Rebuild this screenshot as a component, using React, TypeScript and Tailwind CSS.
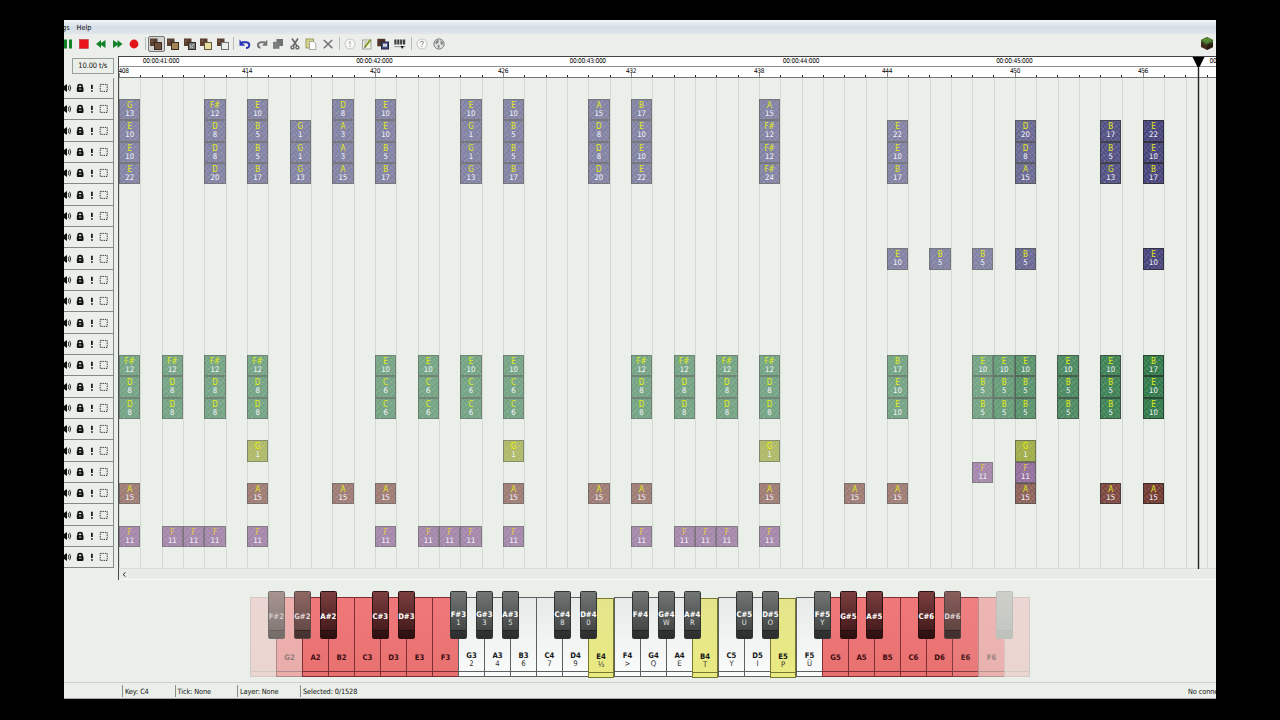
import type { ReactNode } from "react";
import clsx from "clsx";

const STEP = 21.333;
const ROWS = 23;

type Note = { tick: number; row: number; name: string; num: number; kind: string };

// "tick:name:clicks" for every layer
const layers: { row: number; kind: string; notes: string }[] = [
  { row: 1, kind: "harp", notes: "0:G:13 4:F#:12 6:E:10 10:D:8 12:E:10 16:E:10 18:E:10 22:A:15 24:B:17 30:A:15" },
  {
    row: 2,
    kind: "harp",
    notes: "0:E:10 4:D:8 6:B:5 8:G:1 10:A:3 12:E:10 16:G:1 18:B:5 22:D:8 24:E:10 30:F#:12 36:E:22 42:D:20 46:B:17 48:E:22",
  },
  {
    row: 3,
    kind: "harp",
    notes: "0:E:10 4:D:8 6:B:5 8:G:1 10:A:3 12:B:5 16:G:1 18:B:5 22:D:8 24:E:10 30:F#:12 36:E:10 42:D:8 46:B:5 48:E:10",
  },
  {
    row: 4,
    kind: "harp",
    notes: "0:E:22 4:D:20 6:B:17 8:G:13 10:A:15 12:B:17 16:G:13 18:B:17 22:D:20 24:E:22 30:F#:24 36:B:17 42:A:15 46:G:13 48:B:17",
  },
  { row: 8, kind: "harp", notes: "36:E:10 38:B:5 40:B:5 42:B:5 48:E:10" },
  {
    row: 13,
    kind: "bass",
    notes:
      "0:F#:12 2:F#:12 4:F#:12 6:F#:12 12:E:10 14:E:10 16:E:10 18:E:10 24:F#:12 26:F#:12 28:F#:12 30:F#:12 36:B:17 40:E:10 41:E:10 42:E:10 44:E:10 46:E:10 48:B:17",
  },
  {
    row: 14,
    kind: "bass",
    notes: "0:D:8 2:D:8 4:D:8 6:D:8 12:C:6 14:C:6 16:C:6 18:C:6 24:D:8 26:D:8 28:D:8 30:D:8 36:E:10 40:B:5 41:B:5 42:B:5 44:B:5 46:B:5 48:E:10",
  },
  {
    row: 15,
    kind: "bass",
    notes: "0:D:8 2:D:8 4:D:8 6:D:8 12:C:6 14:C:6 16:C:6 18:C:6 24:D:8 26:D:8 28:D:8 30:D:8 36:E:10 40:B:5 41:B:5 42:B:5 44:B:5 46:B:5 48:E:10",
  },
  { row: 17, kind: "snare", notes: "6:G:1 18:G:1 30:G:1 42:G:1" },
  { row: 18, kind: "click", notes: "40:F:11 42:F:11" },
  {
    row: 19,
    kind: "drum",
    notes: "0:A:15 6:A:15 10:A:15 12:A:15 18:A:15 22:A:15 24:A:15 30:A:15 34:A:15 36:A:15 42:A:15 46:A:15 48:A:15",
  },
  {
    row: 21,
    kind: "click",
    notes: "0:F:11 2:F:11 3:F:11 4:F:11 6:F:11 12:F:11 14:F:11 15:F:11 16:F:11 18:F:11 24:F:11 26:F:11 27:F:11 28:F:11 30:F:11",
  },
];

const notes: Note[] = layers.flatMap((l) =>
  l.notes.split(" ").map((s) => {
    const [tick, name, num] = s.split(":");
    return { tick: +tick, row: l.row, name, num: +num, kind: l.kind };
  })
);

const kinds: Record<string, string> = {
  harp: "bg-[#45437a] border-[#33333f]",
  bass: "bg-[#2f7848] border-[#2c4636]",
  snare: "bg-[#8a9a1a] border-[#4e5726]",
  click: "bg-[#7a4a85] border-[#4b3a50]",
  drum: "bg-[#71382f] border-[#3f2c2a]",
};

const fade = (tick: number) => {
  if (tick >= 48) return 1;
  if (tick >= 46) return 0.92;
  if (tick >= 44) return 0.85;
  if (tick >= 42) return 0.78;
  if (tick >= 41) return 0.7;
  return 0.63;
};

const NoteBlock = ({ note }: { note: Note }) => (
  <div className="relative flex flex-col items-center pt-[3px]" style={{ gridColumn: note.tick + 1, gridRow: note.row + 1 }}>
    {/* only the block fades, the label stays readable */}
    <div className={clsx("absolute inset-0 border", kinds[note.kind])} style={{ opacity: fade(note.tick) }}>
      <div className="h-full bg-[repeating-linear-gradient(50deg,#ffffff1a_0px,#ffffff1a_1px,transparent_1px,transparent_3px),repeating-linear-gradient(-50deg,#ffffff16_0px,#ffffff16_1px,transparent_1px,transparent_4px)]" />
    </div>
    <span
      className={clsx(
        "relative text-[8px] leading-[8px]",
        note.kind === "click" ? "text-[#e6c93a]" : note.kind === "snare" ? "text-[#e6f000]" : "text-[#e2ec14]"
      )}
    >
      {note.name}
    </span>
    <span className="relative text-[7.7px] leading-[8.5px] text-[#f4f4fb]">{note.num}</span>
  </div>
);

const LayerRow = () => (
  <div className="h-[21.333px] shrink-0 border-b border-[#85898a] flex items-center">
    <svg width="49" height="20" viewBox="0 0 49 20">
      <path d="M0 8 L3 6 V14 L0 12Z" fill="#111" />
      <path d="M4.2 8 Q5.4 10 4.2 12 M5.6 6.8 Q7.8 10 5.6 13.2" stroke="#333" fill="none" strokeWidth="1" />
      <path d="M14.1 9.5 V8.2 Q14.1 6.6 16.1 6.6 Q18.1 6.6 18.1 8.2 V9.5" stroke="#151515" strokeWidth="1.6" fill="none" />
      <rect x="12.8" y="9" width="6.7" height="5" rx="1" fill="#151515" />
      <rect x="15" y="10.6" width="2.3" height="1.1" fill="#bbb" />
      <path d="M27.9 6.8 V11 M27.9 12.2 V13.8" stroke="#111" strokeWidth="1.7" />
      <rect x="36.2" y="6.4" width="7" height="7" fill="none" stroke="#222" strokeWidth="0.9" strokeDasharray="1.4 0.9" />
    </svg>
  </div>
);

const Tool = ({ children, active }: { children: ReactNode; active?: boolean }) => (
  <div className={clsx("w-[16.6px] h-[16px] shrink-0 flex items-center justify-center", active && "border border-[#777] bg-[#d3d3d3] rounded-[2px]")}>
    <svg width="14" height="14" viewBox="0 0 14 14" className="shrink-0">
      {children}
    </svg>
  </div>
);

const Sep = () => (
  <div className="w-[5.7px] shrink-0 flex justify-center">
    <div className="w-px h-[13px] bg-[#b9bdba]" />
  </div>
);

const Blocks = ({ fill, stroke = "#3a2b20" }: { fill: string; stroke?: string }) => (
  <>
    <rect x="1" y="1.5" width="7.5" height="7.5" fill="#5a4030" />
    <path d="M2 3h2v2H2zM5 5h2v2H5z" fill="#745540" />
    <rect x="5.5" y="5.5" width="7" height="7" fill={fill} stroke={stroke} />
  </>
);

const Toolbar = () => (
  <div className="h-[21.5px] shrink-0 flex items-center pb-[2px] pr-[2px] bg-[#ebeeeb]">
    <div className="flex items-center -ml-[4.6px]">
      <Tool>
        <path d="M3 2.5h3v9H3zM8 2.5h3v9H8z" fill="#118527" />
      </Tool>
      <Tool>
        <rect x="2.3" y="2.5" width="9" height="9" fill="#e9151b" stroke="#b3393a" strokeWidth=".6" />
      </Tool>
      <Tool>
        <path d="M7 3v3l4.5-3v8L7 8v3L2 7z" fill="#13832a" />
      </Tool>
      <Tool>
        <path d="M7.5 3v3L3 3v8l4.5-3v3l5-4z" fill="#13832a" />
      </Tool>
      <Tool>
        <circle cx="7" cy="7" r="4.4" fill="#e3131a" />
      </Tool>
      <Sep />
      <Tool active>
        <Blocks fill="#6d503b" />
      </Tool>
      <Tool>
        <Blocks fill="#a28351" />
      </Tool>
      <Tool>
        <Blocks fill="#777c7d" />
        <path d="M7 11l4-4M7 8l3 3" stroke="#c8cccc" />
      </Tool>
      <Tool>
        <Blocks fill="#e6dfa3" stroke="#625837" />
      </Tool>
      <Tool>
        <Blocks fill="#e8eeee" stroke="#6a7375" />
      </Tool>
      <Sep />
      <Tool>
        <path d="M4 5.2H8.5Q11.5 5.5 11.3 8.5Q11 11 8 11" fill="none" stroke="#2a35b8" strokeWidth="2" />
        <path d="M1.5 2.5V8.8H7.2z" fill="#2a35b8" />
      </Tool>
      <Tool>
        <path d="M10 5.2H6Q3 5.5 3 8Q3 10.5 5.5 10.7" fill="none" stroke="#777" strokeWidth="2" />
        <path d="M12.3 2.5V8.8H7z" fill="#777" />
      </Tool>
      <Tool>
        <path d="M5.5 2h6.5v7H5.5z" fill="#6e716f" />
        <path d="M2 4.8h6.5v7H2z" fill="#7b7e7c" />
      </Tool>
      <Tool>
        <path d="M4 1.5L9 9M10 1.5L5 9" stroke="#666" strokeWidth="1.6" />
        <circle cx="4.5" cy="10.4" r="1.5" fill="none" stroke="#666" strokeWidth="1.4" />
        <circle cx="9.4" cy="10.4" r="1.5" fill="none" stroke="#666" strokeWidth="1.4" />
      </Tool>
      <Tool>
        <rect x="2" y="2" width="7.5" height="9" fill="#d6d68a" stroke="#9b9b62" />
        <path d="M5.5 4.5h4l2.3 2.3v5.7H5.5z" fill="#fff" stroke="#929792" strokeWidth=".8" />
      </Tool>
      <Tool>
        <path d="M2.8 3L11.4 11.2M11.2 3L2.8 11.2" stroke="#777" strokeWidth="1.6" />
      </Tool>
      <Sep />
      <Tool>
        <circle cx="7" cy="7" r="5" fill="#f9faf8" stroke="#c2c5c0" />
        <path d="M7 4v3.6M7 8.7v1.2" stroke="#a3a6a2" strokeWidth="1.2" />
      </Tool>
      <Tool>
        <rect x="2.5" y="3" width="8.5" height="9" fill="#f2f6e4" stroke="#8c9189" strokeWidth=".8" />
        <path d="M4 5h3M4 7h2" stroke="#999" strokeWidth=".8" />
        <path d="M5 9.8L10.8 2.6" stroke="#8a9b2c" strokeWidth="1.9" />
        <path d="M4.2 11l.5-2 1.4 1z" fill="#333" />
      </Tool>
      <Tool>
        <rect x="1.3" y="1.8" width="8" height="7.5" fill="#503229" />
        <rect x="5.5" y="5" width="7" height="7" fill="#4a4f86" stroke="#20263a" />
        <path d="M7 6.7h4v3H7z" fill="#d4d6df" />
      </Tool>
      <Tool>
        <path d="M1.3 2.5h2.2v5H1.3zM4.2 2.5h2.2v5H4.2zM7.1 2.5h2.2v5H7.1zM10 2.5h2.2v5H10z" fill="#3d403e" />
        <path d="M1.3 9.7h11" stroke="#888" strokeWidth=".9" />
        <path d="M7.6 9h3.2l-1.6 3z" fill="#111" />
      </Tool>
      <Sep />
      <Tool>
        <circle cx="7" cy="7" r="5" fill="#f9faf8" stroke="#c2c5c0" />
        <path d="M5.4 5.7Q5.6 4.2 7 4.2Q8.6 4.3 8.5 5.6Q8.4 6.6 7 7.2V8M7 9v1.1" stroke="#858985" fill="none" />
      </Tool>
      <Tool>
        <circle cx="7" cy="7" r="5.1" fill="#e2e5e3" stroke="#777b78" />
        <path d="M3 5.5L5 3l2 .5-.5 2-2 2zM8.5 3l2.5 2.2-.5 3-2-1.2zM5.5 8l2.5.3-.8 2.7-1.2.3z" fill="#858986" />
      </Tool>
    </div>
    <svg width="14" height="15" viewBox="0 0 14 15" className="ml-auto">
      <path d="M7 1L13 4V11L7 14L1 11V4Z" fill="#3f2c1c" />
      <path d="M7 7L13 4V11L7 14Z" fill="#2c1e14" />
      <path d="M7 1L13 4L7 7.4L1 4Z" fill="#568a37" />
      <path d="M1 4v2l2 .5 1 1 3 1.5 2-1.5 2-.3 2-1V4L7 7.4z" fill="#406928" />
    </svg>
  </div>
);

const Ruler = () => (
  <div className="h-[22.3px] shrink-0 bg-white border-t-[1.5px] border-[#444] relative overflow-hidden">
    <div className="h-[10px] border-b border-[#8d8f8e]" />
    <div className="h-[11px] border-b border-[#737675] flex pl-[0.5px]">
      {Array.from({ length: 52 }, (_, i) => (
        <div key={i} className="w-[21.333px] shrink-0 flex items-end">
          <div className={clsx("w-px", i % 6 === 0 ? "h-[4px] bg-[#888]" : "h-[2px] bg-[#222]")} />
        </div>
      ))}
    </div>
    {/* labels are centred on their tick and lie over the scale */}
    {Array.from({ length: 6 }, (_, i) => (
      <span
        key={i}
        className="absolute top-0 -translate-x-1/2 text-[6.6px] leading-[9px] tracking-[-0.3px] text-black whitespace-nowrap"
        style={{ left: 42.5 + i * STEP * 10 }}
      >
        {`00:00:${41 + i}:000`}
      </span>
    ))}
    {Array.from({ length: 9 }, (_, i) => (
      <span
        key={i}
        className="absolute top-[10px] -translate-x-1/2 text-[6.5px] leading-[9px] tracking-[-0.4px] text-black"
        style={{ left: i === 0 ? 5 : i * STEP * 6 + 0.5 }}
      >
        {408 + i * 6}
      </span>
    ))}
  </div>
);

const whites = "F2 G2 A2 B2 C3 D3 E3 F3 G3 A3 B3 C4 D4 E4 F4 G4 A4 B4 C5 D5 E5 F5 G5 A5 B5 C6 D6 E6 F6 G6".split(" ");
const binds: Record<string, string> = {
  G3: "2", A3: "4", B3: "6", C4: "7", D4: "9", E4: "½", F4: ">", G4: "Q", A4: "E", B4: "T", C5: "Y", D5: "I", E5: "P", F5: "Ü",
  "F#3": "1", "G#3": "3", "A#3": "5", "C#4": "8", "D#4": "0", "G#4": "W", "A#4": "R", "C#5": "U", "D#5": "O", "F#5": "Y",
};
const pressed = ["E4", "B4", "E5"];
const keyOpacity: Record<string, number> = { F2: 0.2, G2: 0.52, E6: 0.93, F6: 0.48, G6: 0.2, "F#2": 1, "G#2": 1, "D#6": 1, "F#6": 1 };

// the outermost sharps fade towards the panel colour but hide the keys below
const sharpFill: Record<string, string> = {
  "F#2": "border-[#76706c] bg-linear-to-b from-[#a89490] to-[#7f7571]",
  "G#2": "border-[#5b4745] bg-linear-to-b from-[#8f6763] to-[#5d4441]",
  "D#6": "border-[#54403f] bg-linear-to-b from-[#8a5e5b] to-[#573f3c]",
  "F#6": "border-[#bcc0bb] bg-linear-to-b from-[#cfcfca] to-[#c2c6c0]",
};
const sharpText: Record<string, string> = { "F#2": "text-[#cfc9c6]", "G#2": "text-[#e3dbd9]", "D#6": "text-[#dcd2d0]" };

const Key = ({ name, index }: { name: string; index: number }) => {
  const red = index <= 7 || index >= 22;
  const down = pressed.includes(name);
  const sharp = /[FGACD]/.test(name[0]) && name !== "G6" ? `${name[0]}#${name[1]}` : null;
  const sharpRed = index < 7 || index >= 22;
  return (
    <div className="relative w-[26px] h-[80px] shrink-0">
      <div
        className={clsx(
          "h-full border-y border-l flex flex-col",
          (down || index === 29) && "border-r",
          down
            ? "mt-px border-[#77772f] bg-linear-to-b from-[#e4e58c] to-[#eaea82]"
            : red
              ? "border-[#7c3035] bg-linear-to-b from-[#f0787a] to-[#e87170]"
              : "border-[#5d6060] bg-linear-to-b from-[#e6eae9] to-[#fafcfb]"
        )}
        style={{ opacity: keyOpacity[name] ?? 1 }}
      >
        <div className={clsx("h-[74px] border-b flex flex-col items-center", red ? "border-[#7c3035] pt-[55.5px]" : down ? "border-[#77772f] pt-[53.5px]" : "border-[#5d6060] pt-[53.5px]")}>
          {index > 0 && index < 29 && (
            <span className={clsx("font-bold text-[7.7px] leading-[8px]", red ? "text-[#3d0c10]" : "text-[#161616]")}>{name}</span>
          )}
          {binds[name] && <span className="text-[7.7px] leading-[7.5px] text-[#333]">{binds[name]}</span>}
        </div>
      </div>
      {sharp && (
        <div
          className={clsx(
            "absolute z-10 left-[17.8px] -top-[6px] w-[17px] h-[48px] rounded-[1.5px] border flex flex-col items-center",
            sharpFill[sharp] ??
              (sharpRed
                ? "border-[#2b1112] bg-linear-to-b from-[#7c3f40] to-[#3d1516]"
                : "border-[#303332] bg-linear-to-b from-[#727675] to-[#3b3e3d]")
          )}
        >
          <div
            className={clsx(
              "w-full h-[38.5px] shrink-0 flex flex-col items-center border-b",
              sharp === "F#6" ? "border-black/5" : sharp === "F#2" ? "border-black/20" : "border-black/50",
              sharpRed ? "pt-[21px]" : "pt-[18.5px]"
            )}
          >
            {sharp !== "F#6" && <span className={clsx("font-bold text-[7.7px] leading-[8px]", sharpText[sharp] ?? "text-white")}>{sharp}</span>}
            {binds[sharp] && <span className="text-[7.5px] leading-[7.5px] text-[#e4e6e5]">{binds[sharp]}</span>}
          </div>
          <div className={clsx("w-full grow", sharp === "F#6" ? "bg-black/2" : sharp === "F#2" ? "bg-black/8" : "bg-black/25")} />
        </div>
      )}
    </div>
  );
};

const Status = ({ w, children }: { w: string; children: ReactNode }) => (
  <div className={clsx("h-[12px] border-l border-[#8a8d8b] pl-[2px] pt-[2px] flex items-center", w)}>{children}</div>
);

const App = () => {
  return (
    <div className="w-[1280px] h-[720px] bg-black overflow-hidden pt-[20px] pl-[64px] font-['DejaVu_Sans_Condensed','DejaVu_Sans',sans-serif] text-[#111]">
      <div className="w-[1152px] h-[679px] bg-[#ebefea] overflow-hidden flex flex-col">
        <div className="h-[14px] shrink-0 flex items-center pt-[2px] bg-linear-to-b from-[#f4f6f7] via-[#d5dee7] to-[#dfe5ea] text-[7.3px]">
          <span className="-ml-[2px] w-[14.5px]">gs</span>
          <span>Help</span>
        </div>
        <Toolbar />
        <div className="flex h-[524.5px] shrink-0">
          <div className="w-[50px] shrink-0 flex flex-col">
            <div className="h-[22.3px] shrink-0 pt-[2.5px] pl-[8px] pr-[0.5px]">
              <div className="h-[15.5px] border border-[#999d9b] text-[7.5px] leading-[14.5px] tracking-[-0.1px] text-center">10.00 t/s</div>
            </div>
            <div className="border-r border-[#85898a]">
              {Array.from({ length: ROWS }, (_, i) => (
                <LayerRow key={i} />
              ))}
            </div>
          </div>
          <div className="ml-[3.5px] grow border-l-[1.5px] border-[#4a4d4b] relative overflow-hidden flex flex-col">
            <Ruler />
            <div className="ml-[0.5px] h-[490.66px] shrink-0 grid grid-cols-[repeat(52,21.333px)] grid-rows-[repeat(23,21.333px)] bg-[repeating-linear-gradient(90deg,#d5d9d5_0px,#d5d9d5_1px,transparent_1px,transparent_21.333px)]">
              {notes.map((n) => (
                <NoteBlock key={`${n.row}-${n.tick}`} note={n} />
              ))}
            </div>
            <div className="grow border-y border-[#d8dcd8] border-b-[#f8faf8] bg-[#e8ece8] flex items-center pl-[3px]">
              <svg width="4" height="5" viewBox="0 0 4 5">
                <path d="M3.5 .5L1 2.5L3.5 4.5" fill="none" stroke="#333" />
              </svg>
            </div>
            {/* playhead */}
            <svg className="absolute left-[1073.4px] top-0" width="13" height="514" viewBox="0 0 13 514">
              <path d="M.5 1H12.5L7.5 11H5.5Z" fill="#000" />
              <path d="M6.5 10V513" stroke="#222" strokeWidth="1.4" />
            </svg>
          </div>
        </div>
        <div className="h-[102.5px] shrink-0 border-b border-[#ccd1cf] pt-[17px] pl-[186px] flex">
          {whites.map((name, i) => (
            <Key key={name} name={name} index={i} />
          ))}
        </div>
        <div className="grow flex items-center text-[7.3px] tracking-[-0.1px] whitespace-nowrap border-b border-[#aaa] pt-[2px] pl-[58px]">
          <Status w="w-[52.5px]">Key: C4</Status>
          <Status w="w-[62.5px]">Tick: None</Status>
          <Status w="w-[63px]">Layer: None</Status>
          <Status w="w-[120px]">Selected: 0/1528</Status>
          <span className="ml-auto w-[28px] shrink-0 pt-[2px]">No connection</span>
        </div>
      </div>
    </div>
  );
};

export default App;
